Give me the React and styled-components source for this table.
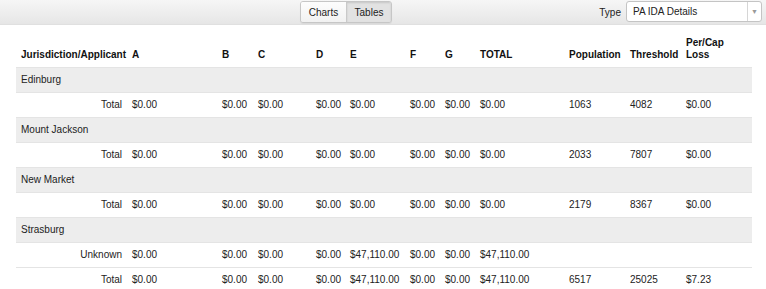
import styled, { createGlobalStyle } from "styled-components";

const GlobalStyle = createGlobalStyle`
  body {
    margin: 0;
    background: #fff;
    font-family: "Liberation Sans", Arial, Helvetica, sans-serif;
    font-size: 10px;
    color: #222;
  }
`;

const Toolbar = styled.div`
  display: flex;
  align-items: center;
  height: 25px;
  padding: 0 4px 0 300px;
  box-sizing: border-box;
  background: linear-gradient(#f6f6f6, #e6e6e6);
  border-bottom: 1px solid #e0e0e0;
`;

const ButtonGroup = styled.div`
  display: flex;
  height: 20px;
  border: 1px solid #c6c6c6;
  border-radius: 3px;
  overflow: hidden;
  box-shadow: 0 1px 1px rgba(0, 0, 0, 0.06);
`;

const ToggleButton = styled.button`
  width: 45px;
  padding: 0;
  border: none;
  border-left: ${(p) => (p.$first ? "none" : "1px solid #c9c9c9")};
  font: inherit;
  font-size: 10px;
  color: #222;
  background: ${(p) =>
    p.$active ? "#e2e2e2" : "linear-gradient(#fdfdfd, #f1f1f1)"};
  box-shadow: ${(p) => (p.$active ? "inset 0 1px 2px rgba(0,0,0,0.12)" : "none")};
`;

const TypeField = styled.label`
  display: flex;
  align-items: center;
  gap: 5px;
  margin-left: auto;
  font-size: 10px;
  color: #222;
`;

const Select = styled.div`
  display: flex;
  width: 136px;
  height: 21px;
  margin-top: -2px;
  box-sizing: border-box;
  border: 1px solid #c4c4c4;
  border-radius: 3px;
  background: #fff;
`;

const SelectValue = styled.span`
  flex: 1;
  display: flex;
  align-items: center;
  padding-left: 6px;
`;

const SelectArrow = styled.span`
  width: 13px;
  display: flex;
  align-items: center;
  justify-content: center;
  border-left: 1px solid #d6d6d6;
  color: #999;
  font-size: 7px;
`;

const Table = styled.table`
  margin-left: 16px;
  width: 736px;
  border-collapse: collapse;
  table-layout: fixed;
  line-height: 12px;
`;

const HeadCell = styled.th`
  padding: 12px 5px 6px;
  text-align: left;
  vertical-align: bottom;
  font-weight: bold;
  color: #111;
  border-bottom: 1px solid #e4e4e4;
`;

const Row = styled.tr`
  background: ${(p) => (p.$group ? "#ededed" : "#fff")};
  border-top: 1px solid #e4e4e4;
`;

const Cell = styled.td`
  padding: 6px 5px 6px;
  white-space: nowrap;
  text-align: ${(p) => (p.$right ? "right" : "left")};
`;

const widths = [111, 90, 36, 58, 34, 60, 35, 35, 89, 61, 56, 71];
const headers = [
  "Jurisdiction/Applicant",
  "A",
  "B",
  "C",
  "D",
  "E",
  "F",
  "G",
  "TOTAL",
  "Population",
  "Threshold",
  "Per/Cap Loss",
];

const zero = ["$0.00", "$0.00", "$0.00", "$0.00", "$0.00", "$0.00", "$0.00", "$0.00"];
const strasburg = ["$0.00", "$0.00", "$0.00", "$0.00", "$47,110.00", "$0.00", "$0.00", "$47,110.00"];

const groups = [
  { name: "Edinburg", rows: [{ label: "Total", values: [...zero, "1063", "4082", "$0.00"] }] },
  { name: "Mount Jackson", rows: [{ label: "Total", values: [...zero, "2033", "7807", "$0.00"] }] },
  { name: "New Market", rows: [{ label: "Total", values: [...zero, "2179", "8367", "$0.00"] }] },
  {
    name: "Strasburg",
    rows: [
      { label: "Unknown", values: [...strasburg, "", "", ""] },
      { label: "Total", values: [...strasburg, "6517", "25025", "$7.23"] },
    ],
  },
];

export default function App() {
  return (
    <>
      <GlobalStyle />
      <Toolbar>
        <ButtonGroup>
          <ToggleButton $first>Charts</ToggleButton>
          <ToggleButton $active>Tables</ToggleButton>
        </ButtonGroup>
        <TypeField>
          Type
          <Select>
            <SelectValue>PA IDA Details</SelectValue>
            <SelectArrow>▼</SelectArrow>
          </Select>
        </TypeField>
      </Toolbar>
      <Table>
        <colgroup>
          {widths.map((w, i) => (
            <col key={i} style={{ width: w }} />
          ))}
        </colgroup>
        <thead>
          <tr>
            {headers.map((h) => (
              <HeadCell key={h}>{h}</HeadCell>
            ))}
          </tr>
        </thead>
        <tbody>
          {groups.map((g) => [
            <Row $group key={g.name}>
              <Cell colSpan={12}>{g.name}</Cell>
            </Row>,
            ...g.rows.map((r) => (
              <Row key={g.name + r.label}>
                <Cell $right>{r.label}</Cell>
                {r.values.map((v, i) => (
                  <Cell key={i}>{v}</Cell>
                ))}
              </Row>
            )),
          ])}
        </tbody>
      </Table>
    </>
  );
}
